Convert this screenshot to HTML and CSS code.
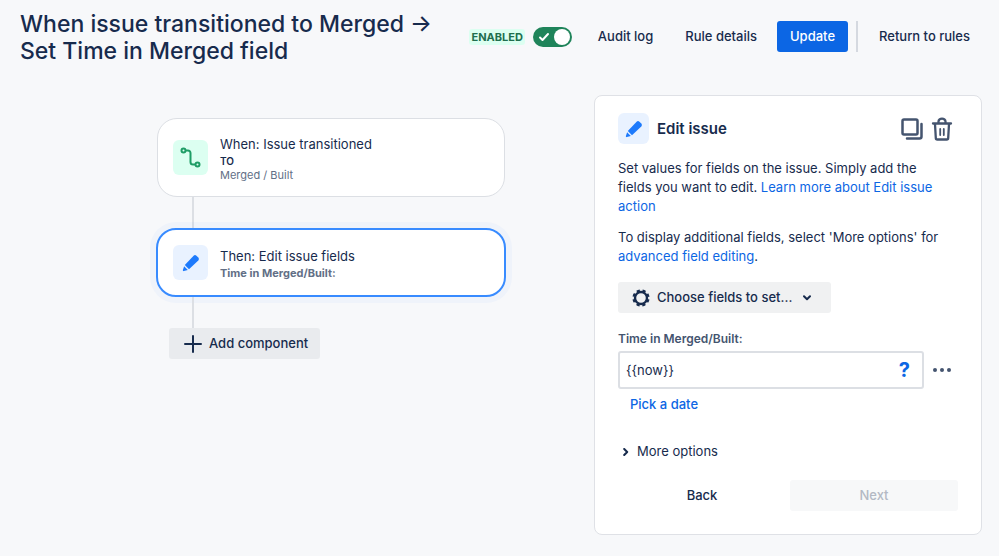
FILE: index.html
```html
<!DOCTYPE html>
<html lang="en">

<head>
    <meta charset="UTF-8">
    <meta name="viewport" content="width=device-width, initial-scale=1.0">
    <title>Automation rule</title>
    <link rel="stylesheet" href="styles.css">
</head>

<body>
    <header class="header">
        <h1 class="title">When issue transitioned to Merged → Set Time in Merged field</h1>
        <div class="actions">
            <label class="status" for="enabled">ENABLED</label>
            <span class="toggle">
                <input type="checkbox" id="enabled" checked>
                <svg width="12" height="10" viewBox="0 0 12 10" fill="none" stroke="#fff" stroke-width="2" stroke-linecap="round" stroke-linejoin="round">
                    <path d="M2 5.5l2.5 2.5L10 2" />
                </svg>
            </span>
            <button class="btn">Audit log</button>
            <button class="btn">Rule details</button>
            <button class="btn primary">Update</button>
            <span class="divider"></span>
            <button class="btn">Return to rules</button>
        </div>
    </header>

    <main class="main">
        <section class="canvas">
            <div class="node">
                <span class="icon green">
                    <svg width="21" height="21" viewBox="0 0 21 21" fill="none" stroke="#1f9d66" stroke-width="2">
                        <circle cx="3.5" cy="3.5" r="2" />
                        <circle cx="17.5" cy="17.5" r="2" />
                        <path d="M5.5 3.5H8a2.5 2.5 0 0 1 2.5 2.5v9a2.5 2.5 0 0 0 2.5 2.5h2.5" />
                    </svg>
                </span>
                <div>
                    <div class="node-title">When: Issue transitioned</div>
                    <div class="node-key">TO</div>
                    <div class="node-text">Merged / Built</div>
                </div>
            </div>
            <div class="line"></div>
            <div class="node selected">
                <span class="icon blue">
                    <svg width="18" height="18" viewBox="0 0 18 18" fill="#1d7afc">
                        <path d="M11.6 1.7a2 2 0 0 1 2.8 0l1.9 1.9a2 2 0 0 1 0 2.8L7 15.2 2.8 11z" />
                        <path d="M2.100 12.2l3.7 3.7-3.9 1.2c-.7.2-1.200-.3-1-1z" />
                    </svg>
                </span>
                <div>
                    <div class="node-title">Then: Edit issue fields</div>
                    <div class="node-text bold">Time in Merged/Built:</div>
                </div>
            </div>
            <div class="line"></div>
            <button class="btn add">
                <svg width="18" height="18" viewBox="0 0 18 18" fill="none" stroke="#172b4d" stroke-width="2" stroke-linecap="round">
                    <path d="M9 1v16M1 9h16" />
                </svg>
                Add component
            </button>
        </section>

        <section class="panel">
            <div class="panel-head">
                <span class="icon blue small">
                    <svg width="18" height="18" viewBox="0 0 18 18" fill="#1d7afc">
                        <path d="M11.6 1.7a2 2 0 0 1 2.8 0l1.9 1.9a2 2 0 0 1 0 2.8L7 15.2 2.8 11z" />
                        <path d="M2.100 12.2l3.7 3.7-3.9 1.2c-.7.2-1.200-.3-1-1z" />
                    </svg>
                </span>
                <h2>Edit issue</h2>
                <button class="icon-btn" aria-label="Duplicate">
                    <svg width="22" height="22" viewBox="0 0 22 22" fill="none" stroke="#44546f" stroke-width="2.5" stroke-linecap="round" stroke-linejoin="round">
                        <rect x="1.5" y="1.5" width="15" height="15" rx="1.5" />
                        <path d="M20.5 6v12.5a2 2 0 0 1-2 2H6" />
                    </svg>
                </button>
                <button class="icon-btn" aria-label="Delete">
                    <svg width="22" height="24" viewBox="0 0 22 24" fill="none" stroke="#44546f" stroke-width="2.3" stroke-linecap="round" stroke-linejoin="round">
                        <path d="M2 6.5h18M4 7l.8 14a1.5 1.5 0 0 0 1.5 1.5h9.4a1.5 1.5 0 0 0 1.5-1.5L18 7M7.5 6V4.5a3.5 2.8 0 0 1 7 0V6" />
                        <path d="M9.2 12v6M12.8 12v6" stroke-width="1.8" />
                    </svg>
                </button>
            </div>
            <p>Set values for fields on the issue. Simply add the fields you want to edit. <a href="#">Learn more about Edit issue action</a></p>
            <p>To display additional fields, select 'More options' for <a href="#">advanced field editing</a>.</p>
            <button class="btn choose">
                <svg width="18" height="18" viewBox="0 0 18 18" fill="none" stroke="#172b4d">
                    <circle cx="9" cy="9" r="6" stroke-width="2.4" />
                    <circle cx="9" cy="9" r="7.5" stroke-width="2.2" stroke-dasharray="3.2 2.69" stroke-dashoffset="-1.3" />
                </svg>
                Choose fields to set...
                <svg class="chevron" width="8" height="6" viewBox="0 0 8 6" fill="none" stroke="#172b4d" stroke-width="2" stroke-linecap="round" stroke-linejoin="round">
                    <path d="M1 1.2l3 3 3-3" />
                </svg>
            </button>
            <label class="field-label" for="time">Time in Merged/Built:</label>
            <div class="field">
                <div class="input-box">
                    <input type="text" id="time" value="{{now}}">
                    <button class="help" aria-label="Help">?</button>
                </div>
                <button class="icon-btn" aria-label="More">
                    <svg width="18" height="6" viewBox="0 0 18 6" fill="#44546f">
                        <circle cx="2" cy="3" r="2" />
                        <circle cx="9" cy="3" r="2" />
                        <circle cx="16" cy="3" r="2" />
                    </svg>
                </button>
            </div>
            <button class="btn pick">Pick a date</button>
            <button class="more">
                <svg width="6" height="8" viewBox="0 0 6 8" fill="none" stroke="#172b4d" stroke-width="2" stroke-linecap="round" stroke-linejoin="round">
                    <path d="M1.2 1l3 3-3 3" />
                </svg>
                More options
            </button>
            <div class="footer">
                <button class="btn">Back</button>
                <button class="btn next" disabled>Next</button>
            </div>
        </section>
    </main>
</body>

</html>
```

FILE: styles.css
```css
* {
    box-sizing: border-box;
}

body {
    margin: 0;
    background: #f7f8fa;
    color: #172b4d;
    font-family: Inter, "Liberation Sans", sans-serif;
    font-size: 13px;
    line-height: 19px;
}

button,
input {
    font: inherit;
    color: inherit;
}

button {
    padding: 0;
    border: none;
    background: none;
}

svg {
    display: block;
    flex: none;
}

a {
    color: #0c66e4;
    text-decoration: none;
}

.header {
    display: flex;
    justify-content: space-between;
    align-items: flex-start;
    padding: 11px 17px 0 20px;
}

.title {
    flex: 0 1 430px;
    margin: 0;
    font-size: 23px;
    font-weight: 500;
    line-height: 27px;
}

.actions {
    display: flex;
    align-items: center;
    flex: none;
    padding-top: 10px;
}

.btn {
    height: 31px;
    padding: 0 12px;
    border-radius: 3px;
    font-weight: 500;
    white-space: nowrap;
}

.status {
    padding: 0 2px;
    border-radius: 3px;
    background: #dcfff1;
    color: #216e4e;
    font-size: 11px;
    font-weight: 700;
    line-height: 16px;
}

.toggle {
    display: flex;
    position: relative;
    margin: 0 14px 0 8px;
}

.toggle input {
    width: 39px;
    height: 20px;
    margin: 0;
    border-radius: 10px;
    background: #1f845a;
    appearance: none;
}

.toggle input::after {
    content: "";
    display: block;
    width: 16px;
    height: 16px;
    margin: 2px 2px 2px auto;
    border-radius: 50%;
    background: #fff;
}

.toggle svg {
    position: absolute;
    top: 5px;
    left: 5px;
}

.actions .btn + .btn {
    margin-left: 8px;
}

.actions .primary {
    padding: 0 13px;
    background: #0c66e4;
    color: #fff;
}

.divider {
    width: 2px;
    height: 31px;
    margin: 0 9px 0 8px;
    background: #d5d9e0;
}

.main {
    display: flex;
    align-items: flex-start;
    padding: 30px 17px 20px 0;
}

.canvas {
    flex: 1;
    padding: 23px 89px 0 157px;
}

.node {
    display: flex;
    align-items: center;
    gap: 12px;
    height: 79px;
    padding: 0 15px;
    border: 1px solid #dcdfe4;
    border-radius: 20px;
    background: #fff;
}

.node.selected {
    height: 69px;
    margin: 0 -1px;
    border: 2px solid #388bff;
    box-shadow: 0 0 0 6px rgba(56, 139, 255, 0.04);
}

.icon {
    display: flex;
    align-items: center;
    justify-content: center;
    flex: none;
    width: 35px;
    height: 35px;
    border-radius: 6px;
}

.icon.small {
    width: 31px;
    height: 31px;
}

.green {
    background: #dcfff1;
}

.blue {
    background: #e9f2ff;
}

.node-title {
    line-height: 20px;
}

.node-key {
    font-size: 10px;
    font-weight: 600;
    line-height: 14px;
}

.node-text {
    color: #626f86;
    font-size: 11px;
    line-height: 14px;
}

.bold {
    font-weight: 700;
}

.line {
    width: 2px;
    height: 31px;
    margin-left: 35px;
    background: #dcdfe4;
}

.add {
    display: flex;
    align-items: center;
    gap: 7px;
    margin-left: 12px;
    padding: 0 12px 0 15px;
    background: #e9ebee;
}

.panel {
    display: flex;
    flex-direction: column;
    align-items: flex-start;
    width: 388px;
    padding: 17px 23px 23px;
    border: 1px solid #dfe1e6;
    border-radius: 8px;
    background: #fff;
}

.panel-head {
    display: flex;
    align-items: center;
    gap: 8px;
    width: 100%;
    padding-right: 5px;
}

.panel h2 {
    flex: 1;
    margin: 0;
    font-size: 15px;
    font-weight: 600;
}

.panel p {
    margin: 15px 0 0;
    padding-right: 8px;
}

.panel p + p {
    margin-top: 12px;
}

.choose {
    display: flex;
    align-items: center;
    gap: 7px;
    margin: 16px 0;
    padding: 0 20px 0 14px;
    background: #f0f1f2;
}

.chevron {
    margin-left: 4px;
}

.field-label {
    margin-bottom: 3px;
    color: #44546f;
    font-size: 12px;
    font-weight: 600;
}

.field {
    display: flex;
    align-items: center;
    gap: 9px;
    width: 100%;
    padding-right: 7px;
}

.input-box {
    display: flex;
    align-items: center;
    flex: 1;
    height: 38px;
    padding: 0 12px 0 6px;
    border: 2px solid #dcdfe4;
    border-radius: 3px;
}

.input-box input {
    flex: 1;
    min-width: 0;
    padding: 0;
    border: none;
    outline: none;
    background: none;
}

.help {
    color: #0c66e4;
    font-size: 20px;
    font-weight: 700;
}

.pick {
    color: #0c66e4;
}

.more {
    display: flex;
    align-items: center;
    gap: 8px;
    margin: 22px 0 19px 5px;
}

.footer {
    display: grid;
    grid-template-columns: 1fr 1fr;
    gap: 4px;
    width: 100%;
}

.next {
    background: #f7f8f9;
    color: #b3b9c4;
}
```
